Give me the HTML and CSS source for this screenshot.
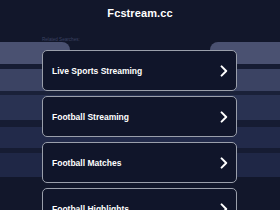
FILE: index.html
```html
<!DOCTYPE html>
<html>
<head>
<meta charset="utf-8">
<link rel="stylesheet" href="styles.css">
</head>
<body>
<header class="top"><h1 class="title">Fcstream.cc</h1></header>
<p class="label">Related Searches:</p>
<div class="tabs"><span class="tab tab-left"></span><span class="tab tab-right"></span></div>
<main class="list">
  <a class="card" href="#"><span>Live Sports Streaming</span><svg class="chev" viewBox="0 0 8 12" width="8" height="12"><path d="M1.6 1.4 L6.2 6 L1.6 10.6"/></svg></a>
  <a class="card" href="#"><span>Football Streaming</span><svg class="chev" viewBox="0 0 8 12" width="8" height="12"><path d="M1.6 1.4 L6.2 6 L1.6 10.6"/></svg></a>
  <a class="card" href="#"><span>Football Matches</span><svg class="chev" viewBox="0 0 8 12" width="8" height="12"><path d="M1.6 1.4 L6.2 6 L1.6 10.6"/></svg></a>
  <a class="card" href="#"><span>Football Highlights</span><svg class="chev" viewBox="0 0 8 12" width="8" height="12"><path d="M1.6 1.4 L6.2 6 L1.6 10.6"/></svg></a>
</main>
</body>
</html>
```
FILE: styles.css
```css
html, body {
  margin: 0;
  padding: 0;
  background: #12172b;
  font-family: "Liberation Sans", Arial, sans-serif;
  overflow: hidden;
}
.top {
  height: 25px;
  display: flex;
  align-items: center;
  justify-content: center;
}
.title {
  margin: 0;
  font-size: 11px;
  font-weight: bold;
  color: #ffffff;
  letter-spacing: 0.1px;
}
.label {
  margin: 13px 0 0 42px;
  height: 4px;
  font-size: 4.6px;
  line-height: 4px;
  color: #3b4262;
}
.tabs {
  display: flex;
  justify-content: space-between;
  height: 8px;
}
.tab {
  width: 70px;
  background: #4a5171;
}
.tab-left { border-radius: 0 9px 0 0; }
.tab-right { border-radius: 9px 0 0 0; }
.list {
  display: flex;
  flex-direction: column;
  gap: 5px;
  padding: 0 43px 0 42px;
  background: linear-gradient(to bottom,
    #4a5171 0, #4a5171 14px,
    #161c33 14px, #161c33 19px,
    #3b4363 19px, #3b4363 41px,
    #1a2139 41px, #1a2139 45px,
    #293252 45px, #293252 70px,
    #161c33 70px, #161c33 77px,
    #222a4a 77px, #222a4a 98px,
    #161c33 98px, #161c33 103px,
    #1f2746 103px, #1f2746 127px,
    #12172b 127px) no-repeat;
}
.card {
  box-sizing: border-box;
  height: 41px;
  display: flex;
  align-items: center;
  justify-content: space-between;
  padding: 0 8px 0 9px;
  background: #10152a;
  border: 1.5px solid #9a9fab;
  border-radius: 5px;
  color: #ffffff;
  text-decoration: none;
  font-size: 8.5px;
  font-weight: bold;
}
.chev path {
  fill: none;
  stroke: #ffffff;
  stroke-width: 2;
  stroke-linecap: round;
  stroke-linejoin: round;
}
```
